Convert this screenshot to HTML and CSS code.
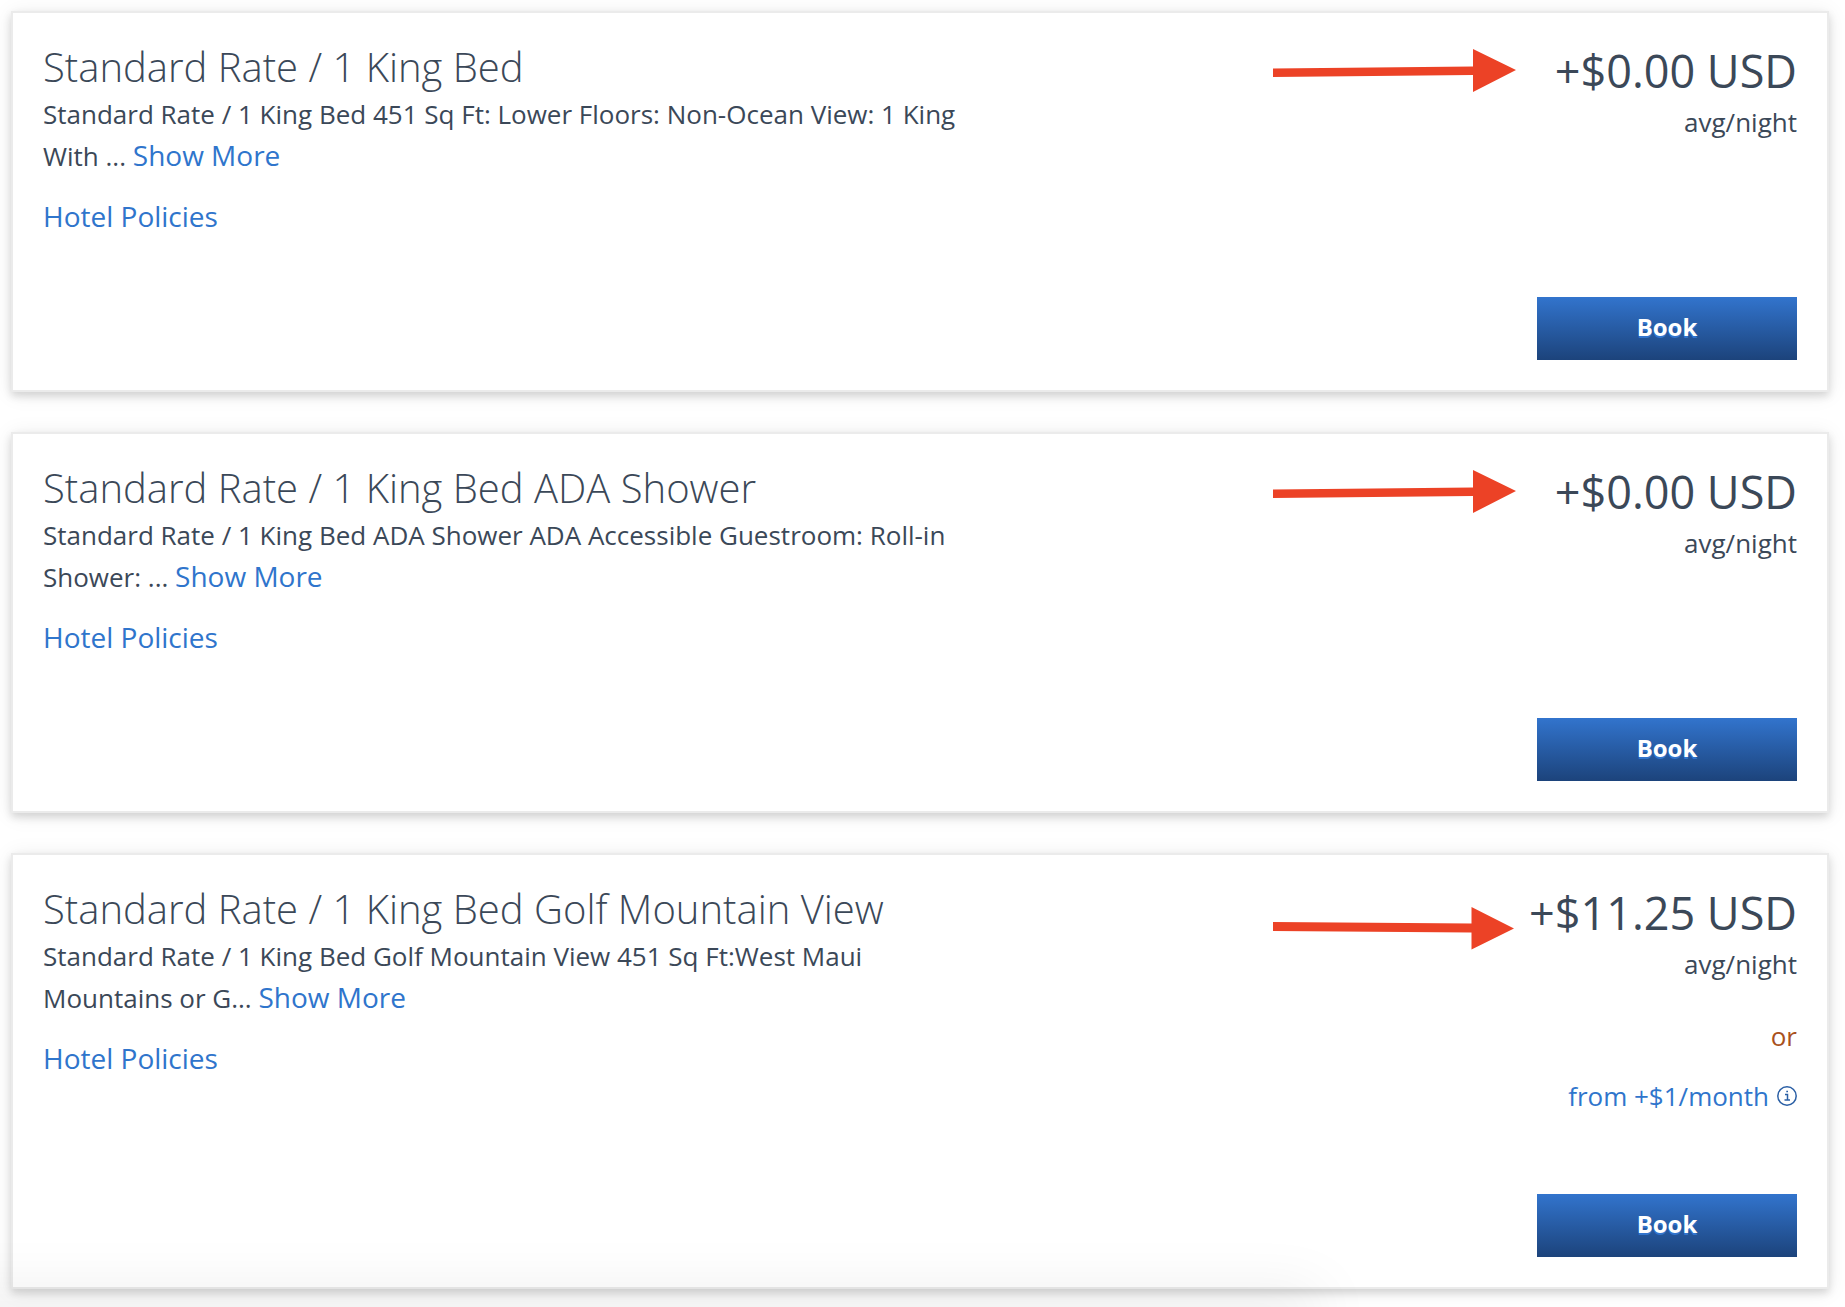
FILE: index.html
```html
<!DOCTYPE html>
<html lang="en">
<head>
  <meta charset="UTF-8">
  <title>Room Rates</title>
  <link rel="stylesheet" href="styles.css">
</head>
<body>
  <main class="rates">
    <section class="rate-card">
      <div class="details">
        <h2>Standard Rate / 1 King Bed</h2>
        <p>Standard Rate / 1 King Bed 451 Sq Ft: Lower Floors: Non-Ocean View: 1 King<br>With ... <a class="show-more" href="#">Show More</a></p>
        <a class="policies" href="#">Hotel Policies</a>
      </div>
      <svg class="arrow" viewBox="0 0 243 43" aria-hidden="true">
        <path d="M0 19.5 L200 17.5 V0 L243 21 L200 43 V26 L0 28 Z"/>
      </svg>
      <div class="pricing">
        <div class="price">+$0.00 USD</div>
        <div class="per-night">avg/night</div>
        <button class="book" type="button">Book</button>
      </div>
    </section>

    <section class="rate-card">
      <div class="details">
        <h2>Standard Rate / 1 King Bed ADA Shower</h2>
        <p>Standard Rate / 1 King Bed ADA Shower ADA Accessible Guestroom: Roll-in<br>Shower: ... <a class="show-more" href="#">Show More</a></p>
        <a class="policies" href="#">Hotel Policies</a>
      </div>
      <svg class="arrow" viewBox="0 0 243 43" aria-hidden="true">
        <path d="M0 19.5 L200 17.5 V0 L243 21 L200 43 V26 L0 28 Z"/>
      </svg>
      <div class="pricing">
        <div class="price">+$0.00 USD</div>
        <div class="per-night">avg/night</div>
        <button class="book" type="button">Book</button>
      </div>
    </section>

    <section class="rate-card">
      <div class="details">
        <h2>Standard Rate / 1 King Bed Golf Mountain View</h2>
        <p>Standard Rate / 1 King Bed Golf Mountain View 451 Sq Ft:West Maui<br>Mountains or G... <a class="show-more" href="#">Show More</a></p>
        <a class="policies" href="#">Hotel Policies</a>
      </div>
      <svg class="arrow arrow-low" viewBox="0 0 243 43" aria-hidden="true">
        <path d="M0 15 L198.5 16.5 V0 L241 21.5 L198.5 42.5 V25.5 L0 24 Z"/>
      </svg>
      <div class="pricing">
        <div class="price">+$11.25 USD</div>
        <div class="per-night">avg/night</div>
        <div class="or">or</div>
        <a class="monthly" href="#">from +$1/month
          <svg class="info" viewBox="0 0 20 20" aria-hidden="true">
            <circle cx="10" cy="10" r="9.2"/>
            <path d="M8 8.5 H10.5 V14 M7.5 14 H13 M9.3 5.5 H11"/>
          </svg>
        </a>
        <button class="book" type="button">Book</button>
      </div>
    </section>
  </main>
  <div class="bottom-shade"></div>
</body>
</html>
```

FILE: styles.css
```css
* {
  box-sizing: border-box;
}

body {
  margin: 0;
  font-family: "Open Sans", sans-serif;
  font-size: 26px;
  line-height: 42px;
  color: #3b4858;
  background: #fff;
}

.rates {
  display: flex;
  flex-direction: column;
  gap: 40px;
  padding: 11px 16px 19px 11px;
}

.rate-card {
  display: grid;
  grid-template-columns: 1fr 243px 281px;
  min-height: 381px;
  padding: 30px;
  background: #fff;
  border: 2px solid #ebebeb;
  box-shadow: 0 4px 8px rgba(0, 0, 0, 0.14), 0 2px 20px rgba(0, 0, 0, 0.08);
}

.details h2 {
  margin: 0;
  font-size: 40px;
  font-weight: 300;
  line-height: 48px;
}

.details p {
  margin: 2px 0 18px;
}

a {
  color: #2f75cc;
  text-decoration: none;
}

.show-more {
  font-size: 28px;
  font-weight: 500;
  line-height: 1;
}

.policies {
  display: block;
  font-size: 28px;
}

.arrow {
  width: 243px;
  height: 43px;
  margin-top: 6px;
  fill: #ec4226;
}

.arrow-low {
  margin-top: 22px;
}

.pricing {
  display: flex;
  flex-direction: column;
  align-items: flex-end;
}

.price {
  font-size: 45px;
  line-height: 56px;
}

.per-night {
  margin-top: 2px;
}

.or {
  margin-top: 30px;
  color: #a9511c;
}

.monthly {
  display: flex;
  align-items: center;
  gap: 8px;
  margin: 18px 0 77px;
}

.info {
  width: 20px;
  height: 20px;
  fill: none;
  stroke: #2a5fa5;
  stroke-width: 1.5;
}

.book {
  width: 260px;
  height: 63px;
  margin-top: auto;
  padding: 0 0 4px;
  border: none;
  font-family: inherit;
  font-size: 24px;
  font-weight: 700;
  color: #fff;
  text-shadow: 0 2px 0 #3274cd;
  background: linear-gradient(#3274cd, #1c437b);
  cursor: pointer;
}

.book:hover {
  background: #1c437b;
}

/* soft shade along the bottom edge of the window */
.bottom-shade {
  position: fixed;
  left: -80px;
  bottom: -10px;
  width: 75%;
  height: 10px;
  box-shadow: 0 0 60px 16px rgba(0, 0, 0, 0.08);
  pointer-events: none;
}
```
